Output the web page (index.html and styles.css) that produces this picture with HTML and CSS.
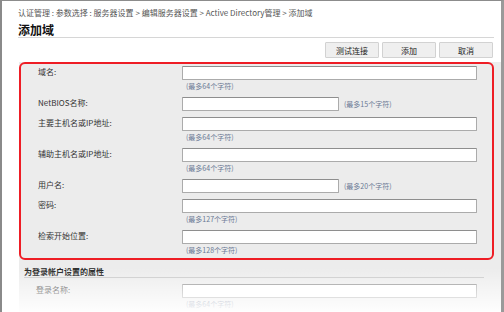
FILE: index.html
```html
<!DOCTYPE html>
<html>
<head>
    <title>添加域</title>
    <link rel="stylesheet" href="styles.css">
</head>
<body>
    <section class="window">
        <div class="top">
            <div class="crumbs">认证管理 : 参数选择 : 服务器设置 &gt; 编辑服务器设置 &gt; Active Directory管理 &gt; 添加域</div>
            <h1 class="title">添加域</h1>
            <div class="actions">
                <button class="btn">测试连接</button>
                <button class="btn">添加</button>
                <button class="btn">取消</button>
            </div>
        </div>

        <div class="panel">
            <div class="highlight">
                <div class="field">
                    <label class="label">域名:</label>
                    <input class="input" type="text">
                    <span class="hint">(最多64个字符)</span>
                </div>
                <div class="field">
                    <label class="label">NetBIOS名称:</label>
                    <div class="inline">
                        <input class="input short" type="text">
                        <span class="hint">(最多15个字符)</span>
                    </div>
                </div>
                <div class="field">
                    <label class="label">主要主机名或IP地址:</label>
                    <input class="input" type="text">
                    <span class="hint">(最多64个字符)</span>
                </div>
                <div class="field">
                    <label class="label">辅助主机名或IP地址:</label>
                    <input class="input" type="text">
                    <span class="hint">(最多64个字符)</span>
                </div>
                <div class="field">
                    <label class="label">用户名:</label>
                    <div class="inline">
                        <input class="input short" type="text">
                        <span class="hint">(最多20个字符)</span>
                    </div>
                </div>
                <div class="field">
                    <label class="label">密码:</label>
                    <input class="input" type="password">
                    <span class="hint">(最多127个字符)</span>
                </div>
                <div class="field">
                    <label class="label">检索开始位置:</label>
                    <input class="input" type="text">
                    <span class="hint">(最多128个字符)</span>
                </div>
            </div>

            <div class="sub">
                <h2 class="sub-title">为登录帐户设置的属性</h2>
                <div class="field sub-field">
                    <label class="label">登录名称:</label>
                    <input class="input" type="text">
                    <span class="hint">(最多64个字符)</span>
                </div>
            </div>
        </div>

        <div class="fade"></div>
    </section>
</body>
</html>
```

FILE: styles.css
```css
:root {
    --color-text: #333333;
    --color-hint: #6a7894;
    --color-panel: #ececec;
    --color-red: #ee1d25;
    --color-line: #d6d6d6;
}

* {
    box-sizing: border-box;
}

html,
body {
    margin: 0;
    height: 100%;
    background: #ffffff;
}

body {
    font-family: "Noto Sans CJK SC", "Noto Sans", sans-serif;
    font-size: 8px;
    color: var(--color-text);
    overflow: hidden;
}

.window {
    position: relative;
    height: 312px;
    border-top: 1px solid #8c8c8c;
    border-left: 2px solid #8a8a8a;
    border-right: 3px solid #9a9a9a;
    overflow: hidden;
}

.top {
    padding: 7px 7px 0 16px;
}

.crumbs {
    line-height: 10px;
    color: #555555;
}

.title {
    margin: 4px 0 0;
    font-size: 12px;
    line-height: 15px;
    font-weight: 700;
    color: #111111;
    border-bottom: 1px solid var(--color-line);
}

.actions {
    display: flex;
    justify-content: flex-end;
    gap: 3px;
    padding: 4px 1px 4px 0;
}

.btn {
    width: 54px;
    height: 16px;
    padding: 0;
    font-family: inherit;
    font-size: 8px;
    color: #222222;
    background: #efefef;
    border: 1px solid #d2d2d2;
    border-radius: 1px;
}

.panel {
    margin-left: 17px;
    background: var(--color-panel);
    height: 260px;
}

.highlight {
    margin-right: 7px;
    border: 2px solid var(--color-red);
    border-radius: 6px;
    padding: 2px 15px 3px 17px;
}

.field {
    display: grid;
    grid-template-columns: 144px 1fr;
    align-items: center;
    margin-bottom: 6px;
}

.label {
    line-height: 14px;
    margin-top: -2px;
}

.input {
    display: block;
    width: 100%;
    height: 14px;
    margin: 0;
    background: #ffffff;
    border: 1px solid #ababab;
    border-top-color: #8e8e8e;
    border-radius: 1px;
    outline: none;
}

.input.short {
    width: 157px;
}

.hint {
    grid-column: 2;
    margin-top: 1px;
    padding-left: 4px;
    font-size: 7px;
    line-height: 10px;
    color: var(--color-hint);
}

.inline {
    display: flex;
    align-items: center;
}

.inline .hint {
    margin: 0 0 0 1px;
}

.highlight .field:last-child {
    margin-bottom: 0;
}

.sub {
    padding: 7px 17px 0 5px;
}

.sub-title {
    margin: 0 0 6px;
    font-size: 8px;
    line-height: 10px;
    font-weight: 700;
    color: #222222;
    border-bottom: 1px solid #c8c8c8;
}

.sub-field {
    grid-template-columns: 146px 1fr;
    padding-left: 12px;
    margin-right: 7px;
}

.fade {
    position: absolute;
    left: 0;
    right: 0;
    bottom: 0;
    height: 44px;
    background: linear-gradient(rgba(255, 255, 255, 0), rgba(255, 255, 255, 0.95));
}
```
